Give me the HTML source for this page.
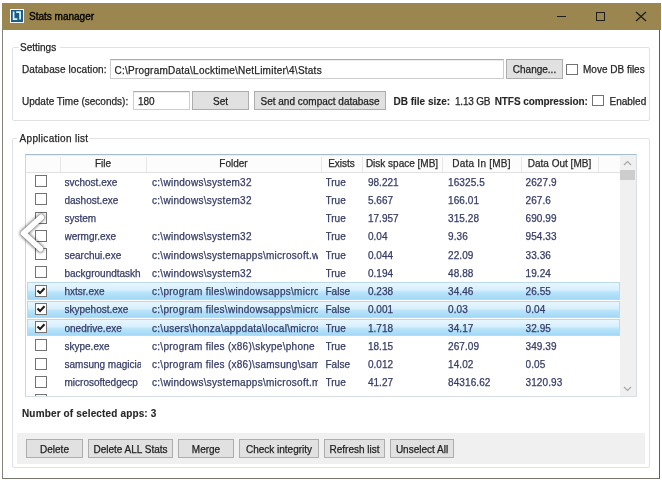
<!DOCTYPE html>
<html><head><meta charset="utf-8">
<style>
html,body{margin:0;padding:0;}
#root{position:absolute;left:0;top:0;width:662px;height:483px;will-change:transform;}
body{width:662px;height:483px;overflow:hidden;background:#fff;position:relative;font-family:"Liberation Sans",sans-serif;font-size:10px;color:#262626;}
.t{position:absolute;white-space:nowrap;line-height:12px;-webkit-text-stroke:0.25px currentColor;}
.b{position:absolute;box-sizing:border-box;}
.btn{-webkit-text-stroke:0.25px currentColor;position:absolute;background:#e1e1e1;border:1px solid #adadad;text-align:center;white-space:nowrap;color:#222;}
.cb{position:absolute;border:1px solid #737373;background:#fff;}
.bold{font-weight:bold;-webkit-text-stroke:0.1px currentColor;}
.row{color:#363c66;}
.hdr{color:#2a2a2a;}
.tb{border:1px solid #cdcdcd;border-top-color:#adadad;box-shadow:inset 0 1px 0 #ececec;background:#fff;}
</style></head><body><div id="root">
<div class="b" style="left:2px;top:3px;width:658px;height:476px;border:1px solid #86837a;border-right-color:#5f5d57;border-bottom-color:#77746b;background:#fff"></div>
<div class="b" style="left:2px;top:3px;width:659px;height:27px;background:#9b864f"></div>
<div class="b" style="left:10px;top:9px;width:14px;height:14px;background:#f4f8fa"></div>
<div class="b" style="left:11px;top:10px;width:12px;height:12px;background:#1d5b8a"></div>
<svg class="b" style="left:10px;top:9px" width="14" height="14" viewBox="0 0 14 14"><path d="M3.6 2.4 V10.1 H7.3 M6.2 3.2 H10.1 V10.6" fill="none" stroke="#d8f6ff" stroke-width="1.7"/></svg>
<div class="t " style="left:29px;top:10.50px;color:#000;-webkit-text-stroke:0.35px #000">Stats manager</div>
<div class="b" style="left:557px;top:16px;width:9px;height:1px;background:#1e1e1e"></div>
<div class="b" style="left:596px;top:12px;width:9px;height:9px;border:1px solid #1e1e1e"></div>
<svg class="b" style="left:635px;top:11px" width="12" height="11" viewBox="0 0 12 11"><path d="M1 1 L11 10 M11 1 L1 10" stroke="#1e1e1e" stroke-width="1.3"/></svg>
<div class="b" style="left:12px;top:47px;width:638px;height:74px;border:1px solid #e0e2e6;border-radius:2px"></div>
<div class="b" style="left:19px;top:40px;width:41px;height:12px;background:#fff"></div>
<div class="t " style="left:20px;top:41.80px;">Settings</div>
<div class="t " style="left:22px;top:64.30px;letter-spacing:0.1px">Database location:</div>
<div class="b tb" style="left:110px;top:59px;width:394px;height:20px;"></div>
<div class="t " style="left:114.5px;top:64.50px;letter-spacing:0.24px">C:\ProgramData\Locktime\NetLimiter\4\Stats</div>
<div class="btn" style="left:506px;top:59px;width:55px;height:18px;line-height:18px;"><span style="position:relative;top:1px">Change...</span></div>
<div class="cb" style="left:566px;top:64px;width:10px;height:9px"></div>
<div class="t " style="left:583px;top:64.20px;">Move DB files</div>
<div class="t " style="left:22px;top:95.50px;letter-spacing:0px">Update Time (seconds):</div>
<div class="b tb" style="left:133px;top:91px;width:57px;height:19px;"></div>
<div class="t " style="left:138px;top:95.50px;">180</div>
<div class="btn" style="left:192px;top:91px;width:55px;height:17px;line-height:17px;"><span style="position:relative;top:1px">Set</span></div>
<div class="btn" style="left:254px;top:91px;width:130px;height:17px;line-height:17px;"><span style="position:relative;top:1px">Set and compact database</span></div>
<div class="t bold" style="left:393.5px;top:95.50px;">DB file size:</div>
<div class="t " style="left:455px;top:95.50px;letter-spacing:-0.2px">1.13 GB</div>
<div class="t bold" style="left:494.7px;top:95.50px;letter-spacing:-0.08px">NTFS compression:</div>
<div class="cb" style="left:592px;top:95px;width:10px;height:9px"></div>
<div class="t " style="left:609.5px;top:95.50px;">Enabled</div>
<div class="b" style="left:12px;top:138px;width:638px;height:330px;border:1px solid #e0e2e6;border-radius:2px"></div>
<div class="b" style="left:17px;top:130px;width:72px;height:14px;background:#fff"></div>
<div class="t " style="left:19.6px;top:133.10px;letter-spacing:0.3px">Application list</div>
<div class="b" style="left:25px;top:154px;width:612px;height:243px;border:1px solid #d6dee6;border-top-color:#a9bccf;border-left-color:#c9d6e3;background:#fff"></div>
<div class="b" style="left:26px;top:155px;width:594px;height:18px;background:#fcfcfc;border-bottom:1px solid #e2e2e2;box-shadow:inset 0 1px 0 #e9f0f7"></div>
<div class="b" style="left:60px;top:157px;width:1px;height:15px;background:#e6e6e6"></div>
<div class="b" style="left:146px;top:157px;width:1px;height:15px;background:#e6e6e6"></div>
<div class="b" style="left:321px;top:157px;width:1px;height:15px;background:#e6e6e6"></div>
<div class="b" style="left:362px;top:157px;width:1px;height:15px;background:#e6e6e6"></div>
<div class="b" style="left:442px;top:157px;width:1px;height:15px;background:#e6e6e6"></div>
<div class="b" style="left:521px;top:157px;width:1px;height:15px;background:#e6e6e6"></div>
<div class="b" style="left:598px;top:157px;width:1px;height:15px;background:#e6e6e6"></div>
<div class="t hdr" style="left:60px;width:86px;text-align:center;top:158.30px;letter-spacing:0px">File</div>
<div class="t hdr" style="left:146px;width:175px;text-align:center;top:158.30px;letter-spacing:0px">Folder</div>
<div class="t hdr" style="left:321px;width:41px;text-align:center;top:158.30px;letter-spacing:0px">Exists</div>
<div class="t hdr" style="left:362px;width:80px;text-align:center;top:158.30px;letter-spacing:0px">Disk space [MB]</div>
<div class="t hdr" style="left:442px;width:79px;text-align:center;top:158.30px;letter-spacing:0.25px">Data In [MB]</div>
<div class="t hdr" style="left:521px;width:77px;text-align:center;top:158.30px;letter-spacing:0px">Data Out [MB]</div>
<div class="b" style="left:26px;top:173px;width:594px;height:223px;overflow:hidden">
<div class="cb" style="left:9px;top:2px;width:10px;height:10px"></div>
<div class="t row" style="left:38.5px;width:76.5px;overflow:hidden;top:3.60px;letter-spacing:0px">svchost.exe</div>
<div class="t row" style="left:126px;width:166px;overflow:hidden;top:3.60px;letter-spacing:0.28px">c:\windows\system32</div>
<div class="t row" style="left:299.5px;width:34.5px;overflow:hidden;top:3.60px;letter-spacing:0px">True</div>
<div class="t row" style="left:342px;width:72px;overflow:hidden;top:3.60px;letter-spacing:0px">98.221</div>
<div class="t row" style="left:422px;width:71px;overflow:hidden;top:3.60px;letter-spacing:0.1px">16325.5</div>
<div class="t row" style="left:499.5px;width:70.5px;overflow:hidden;top:3.60px;letter-spacing:0.1px">2627.9</div>
<div class="cb" style="left:9px;top:20px;width:10px;height:10px"></div>
<div class="t row" style="left:38.5px;width:76.5px;overflow:hidden;top:21.86px;letter-spacing:0px">dashost.exe</div>
<div class="t row" style="left:126px;width:166px;overflow:hidden;top:21.86px;letter-spacing:0.28px">c:\windows\system32</div>
<div class="t row" style="left:299.5px;width:34.5px;overflow:hidden;top:21.86px;letter-spacing:0px">True</div>
<div class="t row" style="left:342px;width:72px;overflow:hidden;top:21.86px;letter-spacing:0px">5.667</div>
<div class="t row" style="left:422px;width:71px;overflow:hidden;top:21.86px;letter-spacing:0.1px">166.01</div>
<div class="t row" style="left:499.5px;width:70.5px;overflow:hidden;top:21.86px;letter-spacing:0.1px">267.6</div>
<div class="cb" style="left:9px;top:39px;width:10px;height:10px"></div>
<div class="t row" style="left:38.5px;width:76.5px;overflow:hidden;top:40.12px;letter-spacing:0px">system</div>
<div class="t row" style="left:126px;width:166px;overflow:hidden;top:40.12px;letter-spacing:0.28px"></div>
<div class="t row" style="left:299.5px;width:34.5px;overflow:hidden;top:40.12px;letter-spacing:0px">True</div>
<div class="t row" style="left:342px;width:72px;overflow:hidden;top:40.12px;letter-spacing:0px">17.957</div>
<div class="t row" style="left:422px;width:71px;overflow:hidden;top:40.12px;letter-spacing:0.1px">315.28</div>
<div class="t row" style="left:499.5px;width:70.5px;overflow:hidden;top:40.12px;letter-spacing:0.1px">690.99</div>
<div class="cb" style="left:9px;top:57px;width:10px;height:10px"></div>
<div class="t row" style="left:38.5px;width:76.5px;overflow:hidden;top:58.38px;letter-spacing:0px">wermgr.exe</div>
<div class="t row" style="left:126px;width:166px;overflow:hidden;top:58.38px;letter-spacing:0.28px">c:\windows\system32</div>
<div class="t row" style="left:299.5px;width:34.5px;overflow:hidden;top:58.38px;letter-spacing:0px">True</div>
<div class="t row" style="left:342px;width:72px;overflow:hidden;top:58.38px;letter-spacing:0px">0.04</div>
<div class="t row" style="left:422px;width:71px;overflow:hidden;top:58.38px;letter-spacing:0.1px">9.36</div>
<div class="t row" style="left:499.5px;width:70.5px;overflow:hidden;top:58.38px;letter-spacing:0.1px">954.33</div>
<div class="cb" style="left:9px;top:75px;width:10px;height:10px"></div>
<div class="t row" style="left:38.5px;width:76.5px;overflow:hidden;top:76.64px;letter-spacing:0px">searchui.exe</div>
<div class="t row" style="left:126px;width:166px;overflow:hidden;top:76.64px;letter-spacing:0.28px">c:\windows\systemapps\microsoft.windows</div>
<div class="t row" style="left:299.5px;width:34.5px;overflow:hidden;top:76.64px;letter-spacing:0px">True</div>
<div class="t row" style="left:342px;width:72px;overflow:hidden;top:76.64px;letter-spacing:0px">0.044</div>
<div class="t row" style="left:422px;width:71px;overflow:hidden;top:76.64px;letter-spacing:0.1px">22.09</div>
<div class="t row" style="left:499.5px;width:70.5px;overflow:hidden;top:76.64px;letter-spacing:0.1px">33.36</div>
<div class="cb" style="left:9px;top:93px;width:10px;height:10px"></div>
<div class="t row" style="left:38.5px;width:76.5px;overflow:hidden;top:94.90px;letter-spacing:0px">backgroundtaskhost.exe</div>
<div class="t row" style="left:126px;width:166px;overflow:hidden;top:94.90px;letter-spacing:0.28px">c:\windows\system32</div>
<div class="t row" style="left:299.5px;width:34.5px;overflow:hidden;top:94.90px;letter-spacing:0px">True</div>
<div class="t row" style="left:342px;width:72px;overflow:hidden;top:94.90px;letter-spacing:0px">0.194</div>
<div class="t row" style="left:422px;width:71px;overflow:hidden;top:94.90px;letter-spacing:0.1px">48.88</div>
<div class="t row" style="left:499.5px;width:70.5px;overflow:hidden;top:94.90px;letter-spacing:0.1px">19.24</div>
<div class="b" style="left:1px;top:109.26px;width:593px;height:17.3px;border:1px solid #b4dcf1;border-top-color:#bcd9e8;background:linear-gradient(#e8f6fe,#d8f0fd 42%,#bae4fa 58%,#a2d8f7)"></div>
<div class="cb" style="left:9px;top:112px;width:10px;height:10px"></div>
<svg class="b" style="left:9px;top:112px" width="12" height="12" viewBox="0 0 12 12"><path d="M2.5 5.6 L5.0 8.1 L9.5 3.2" fill="none" stroke="#1c1c1c" stroke-width="2.1"/></svg>
<div class="t row" style="left:38.5px;width:76.5px;overflow:hidden;top:113.16px;letter-spacing:0px">hxtsr.exe</div>
<div class="t row" style="left:126px;width:166px;overflow:hidden;top:113.16px;letter-spacing:0.28px">c:\program files\windowsapps\microsoft</div>
<div class="t row" style="left:299.5px;width:34.5px;overflow:hidden;top:113.16px;letter-spacing:0px">False</div>
<div class="t row" style="left:342px;width:72px;overflow:hidden;top:113.16px;letter-spacing:0px">0.238</div>
<div class="t row" style="left:422px;width:71px;overflow:hidden;top:113.16px;letter-spacing:0.1px">34.46</div>
<div class="t row" style="left:499.5px;width:70.5px;overflow:hidden;top:113.16px;letter-spacing:0.1px">26.55</div>
<div class="b" style="left:1px;top:127.52px;width:593px;height:17.3px;border:1px solid #b4dcf1;border-top-color:#bcd9e8;background:linear-gradient(#e8f6fe,#d8f0fd 42%,#bae4fa 58%,#a2d8f7)"></div>
<div class="cb" style="left:9px;top:130px;width:10px;height:10px"></div>
<svg class="b" style="left:9px;top:130px" width="12" height="12" viewBox="0 0 12 12"><path d="M2.5 5.6 L5.0 8.1 L9.5 3.2" fill="none" stroke="#1c1c1c" stroke-width="2.1"/></svg>
<div class="t row" style="left:38.5px;width:76.5px;overflow:hidden;top:131.42px;letter-spacing:0px">skypehost.exe</div>
<div class="t row" style="left:126px;width:166px;overflow:hidden;top:131.42px;letter-spacing:0.28px">c:\program files\windowsapps\microsoft</div>
<div class="t row" style="left:299.5px;width:34.5px;overflow:hidden;top:131.42px;letter-spacing:0px">False</div>
<div class="t row" style="left:342px;width:72px;overflow:hidden;top:131.42px;letter-spacing:0px">0.001</div>
<div class="t row" style="left:422px;width:71px;overflow:hidden;top:131.42px;letter-spacing:0.1px">0.03</div>
<div class="t row" style="left:499.5px;width:70.5px;overflow:hidden;top:131.42px;letter-spacing:0.1px">0.04</div>
<div class="b" style="left:1px;top:145.78px;width:593px;height:17.3px;border:1px solid #b4dcf1;border-top-color:#bcd9e8;background:linear-gradient(#e8f6fe,#d8f0fd 42%,#bae4fa 58%,#a2d8f7)"></div>
<div class="cb" style="left:9px;top:148px;width:10px;height:10px"></div>
<svg class="b" style="left:9px;top:148px" width="12" height="12" viewBox="0 0 12 12"><path d="M2.5 5.6 L5.0 8.1 L9.5 3.2" fill="none" stroke="#1c1c1c" stroke-width="2.1"/></svg>
<div class="t row" style="left:38.5px;width:76.5px;overflow:hidden;top:149.68px;letter-spacing:0px">onedrive.exe</div>
<div class="t row" style="left:126px;width:166px;overflow:hidden;top:149.68px;letter-spacing:0.28px">c:\users\honza\appdata\local\microsoft</div>
<div class="t row" style="left:299.5px;width:34.5px;overflow:hidden;top:149.68px;letter-spacing:0px">True</div>
<div class="t row" style="left:342px;width:72px;overflow:hidden;top:149.68px;letter-spacing:0px">1.718</div>
<div class="t row" style="left:422px;width:71px;overflow:hidden;top:149.68px;letter-spacing:0.1px">34.17</div>
<div class="t row" style="left:499.5px;width:70.5px;overflow:hidden;top:149.68px;letter-spacing:0.1px">32.95</div>
<div class="cb" style="left:9px;top:166px;width:10px;height:10px"></div>
<div class="t row" style="left:38.5px;width:76.5px;overflow:hidden;top:167.94px;letter-spacing:0px">skype.exe</div>
<div class="t row" style="left:126px;width:166px;overflow:hidden;top:167.94px;letter-spacing:0.28px">c:\program files (x86)\skype\phone</div>
<div class="t row" style="left:299.5px;width:34.5px;overflow:hidden;top:167.94px;letter-spacing:0px">True</div>
<div class="t row" style="left:342px;width:72px;overflow:hidden;top:167.94px;letter-spacing:0px">18.15</div>
<div class="t row" style="left:422px;width:71px;overflow:hidden;top:167.94px;letter-spacing:0.1px">267.09</div>
<div class="t row" style="left:499.5px;width:70.5px;overflow:hidden;top:167.94px;letter-spacing:0.1px">349.39</div>
<div class="cb" style="left:9px;top:185px;width:10px;height:10px"></div>
<div class="t row" style="left:38.5px;width:76.5px;overflow:hidden;top:186.20px;letter-spacing:0px">samsung magician.exe</div>
<div class="t row" style="left:126px;width:166px;overflow:hidden;top:186.20px;letter-spacing:0.28px">c:\program files (x86)\samsung\samsung magician</div>
<div class="t row" style="left:299.5px;width:34.5px;overflow:hidden;top:186.20px;letter-spacing:0px">False</div>
<div class="t row" style="left:342px;width:72px;overflow:hidden;top:186.20px;letter-spacing:0px">0.012</div>
<div class="t row" style="left:422px;width:71px;overflow:hidden;top:186.20px;letter-spacing:0.1px">14.02</div>
<div class="t row" style="left:499.5px;width:70.5px;overflow:hidden;top:186.20px;letter-spacing:0.1px">0.05</div>
<div class="cb" style="left:9px;top:203px;width:10px;height:10px"></div>
<div class="t row" style="left:38.5px;width:76.5px;overflow:hidden;top:204.46px;letter-spacing:0px">microsoftedgecp</div>
<div class="t row" style="left:126px;width:166px;overflow:hidden;top:204.46px;letter-spacing:0.28px">c:\windows\systemapps\microsoft.microsoftedge</div>
<div class="t row" style="left:299.5px;width:34.5px;overflow:hidden;top:204.46px;letter-spacing:0px">True</div>
<div class="t row" style="left:342px;width:72px;overflow:hidden;top:204.46px;letter-spacing:0px">41.27</div>
<div class="t row" style="left:422px;width:71px;overflow:hidden;top:204.46px;letter-spacing:0.1px">84316.62</div>
<div class="t row" style="left:499.5px;width:70.5px;overflow:hidden;top:204.46px;letter-spacing:0.1px">3120.93</div>
<div class="cb" style="left:9px;top:221px;width:10px;height:10px"></div>
<div class="t row" style="left:126px;width:166px;overflow:hidden;top:222.72px;letter-spacing:0.28px"></div>
<div class="t row" style="left:299.5px;width:34.5px;overflow:hidden;top:222.72px;letter-spacing:0px"></div>
<div class="t row" style="left:342px;width:72px;overflow:hidden;top:222.72px;letter-spacing:0px"></div>
<div class="t row" style="left:422px;width:71px;overflow:hidden;top:222.72px;letter-spacing:0.1px"></div>
<div class="t row" style="left:499.5px;width:70.5px;overflow:hidden;top:222.72px;letter-spacing:0.1px"></div>
</div>
<div class="b" style="left:620px;top:155px;width:16px;height:241px;background:#f0f0f0"></div>
<div class="b" style="left:620px;top:170px;width:15px;height:10px;background:#cdcdcd"></div>
<svg class="b" style="left:622px;top:159px" width="11" height="8" viewBox="0 0 11 8"><path d="M2 6 L5.5 2.5 L9 6" fill="none" stroke="#a8a8a8" stroke-width="1.2"/></svg>
<svg class="b" style="left:622px;top:385px" width="11" height="8" viewBox="0 0 11 8"><path d="M2 2 L5.5 5.5 L9 2" fill="none" stroke="#a8a8a8" stroke-width="1.2"/></svg>
<div class="t bold" style="left:22px;top:407.50px;letter-spacing:0.15px">Number of selected apps: 3</div>
<div class="b" style="left:17px;top:433px;width:628px;height:31px;background:#f0f0f0"></div>
<div class="btn" style="left:26px;top:439px;width:55px;height:17px;line-height:17px;"><span style="position:relative;top:1px">Delete</span></div>
<div class="btn" style="left:88px;top:439px;width:83px;height:17px;line-height:17px;"><span style="position:relative;top:1px">Delete ALL Stats</span></div>
<div class="btn" style="left:178px;top:439px;width:54px;height:17px;line-height:17px;"><span style="position:relative;top:1px">Merge</span></div>
<div class="btn" style="left:239px;top:439px;width:78px;height:17px;line-height:17px;"><span style="position:relative;top:1px">Check integrity</span></div>
<div class="btn" style="left:324px;top:439px;width:59px;height:17px;line-height:17px;"><span style="position:relative;top:1px">Refresh list</span></div>
<div class="btn" style="left:390px;top:439px;width:62px;height:17px;line-height:17px;"><span style="position:relative;top:1px">Unselect All</span></div>
<svg class="b" style="left:0px;top:200px" width="60" height="70" viewBox="0 200 60 70"><defs><filter id="sh" x="-50%" y="-50%" width="200%" height="200%"><feGaussianBlur stdDeviation="1.4"/></filter></defs><path d="M41.2 217.3 L23.5 233.3 L40.4 248.8" fill="none" stroke="rgba(0,0,0,0.6)" stroke-width="7" stroke-linecap="round" stroke-linejoin="round" filter="url(#sh)"/><path d="M41.2 217.3 L23.5 233.3 L40.4 248.8" fill="none" stroke="#fff" stroke-width="5.6" stroke-linecap="round" stroke-linejoin="round"/></svg>
</div></body></html>
